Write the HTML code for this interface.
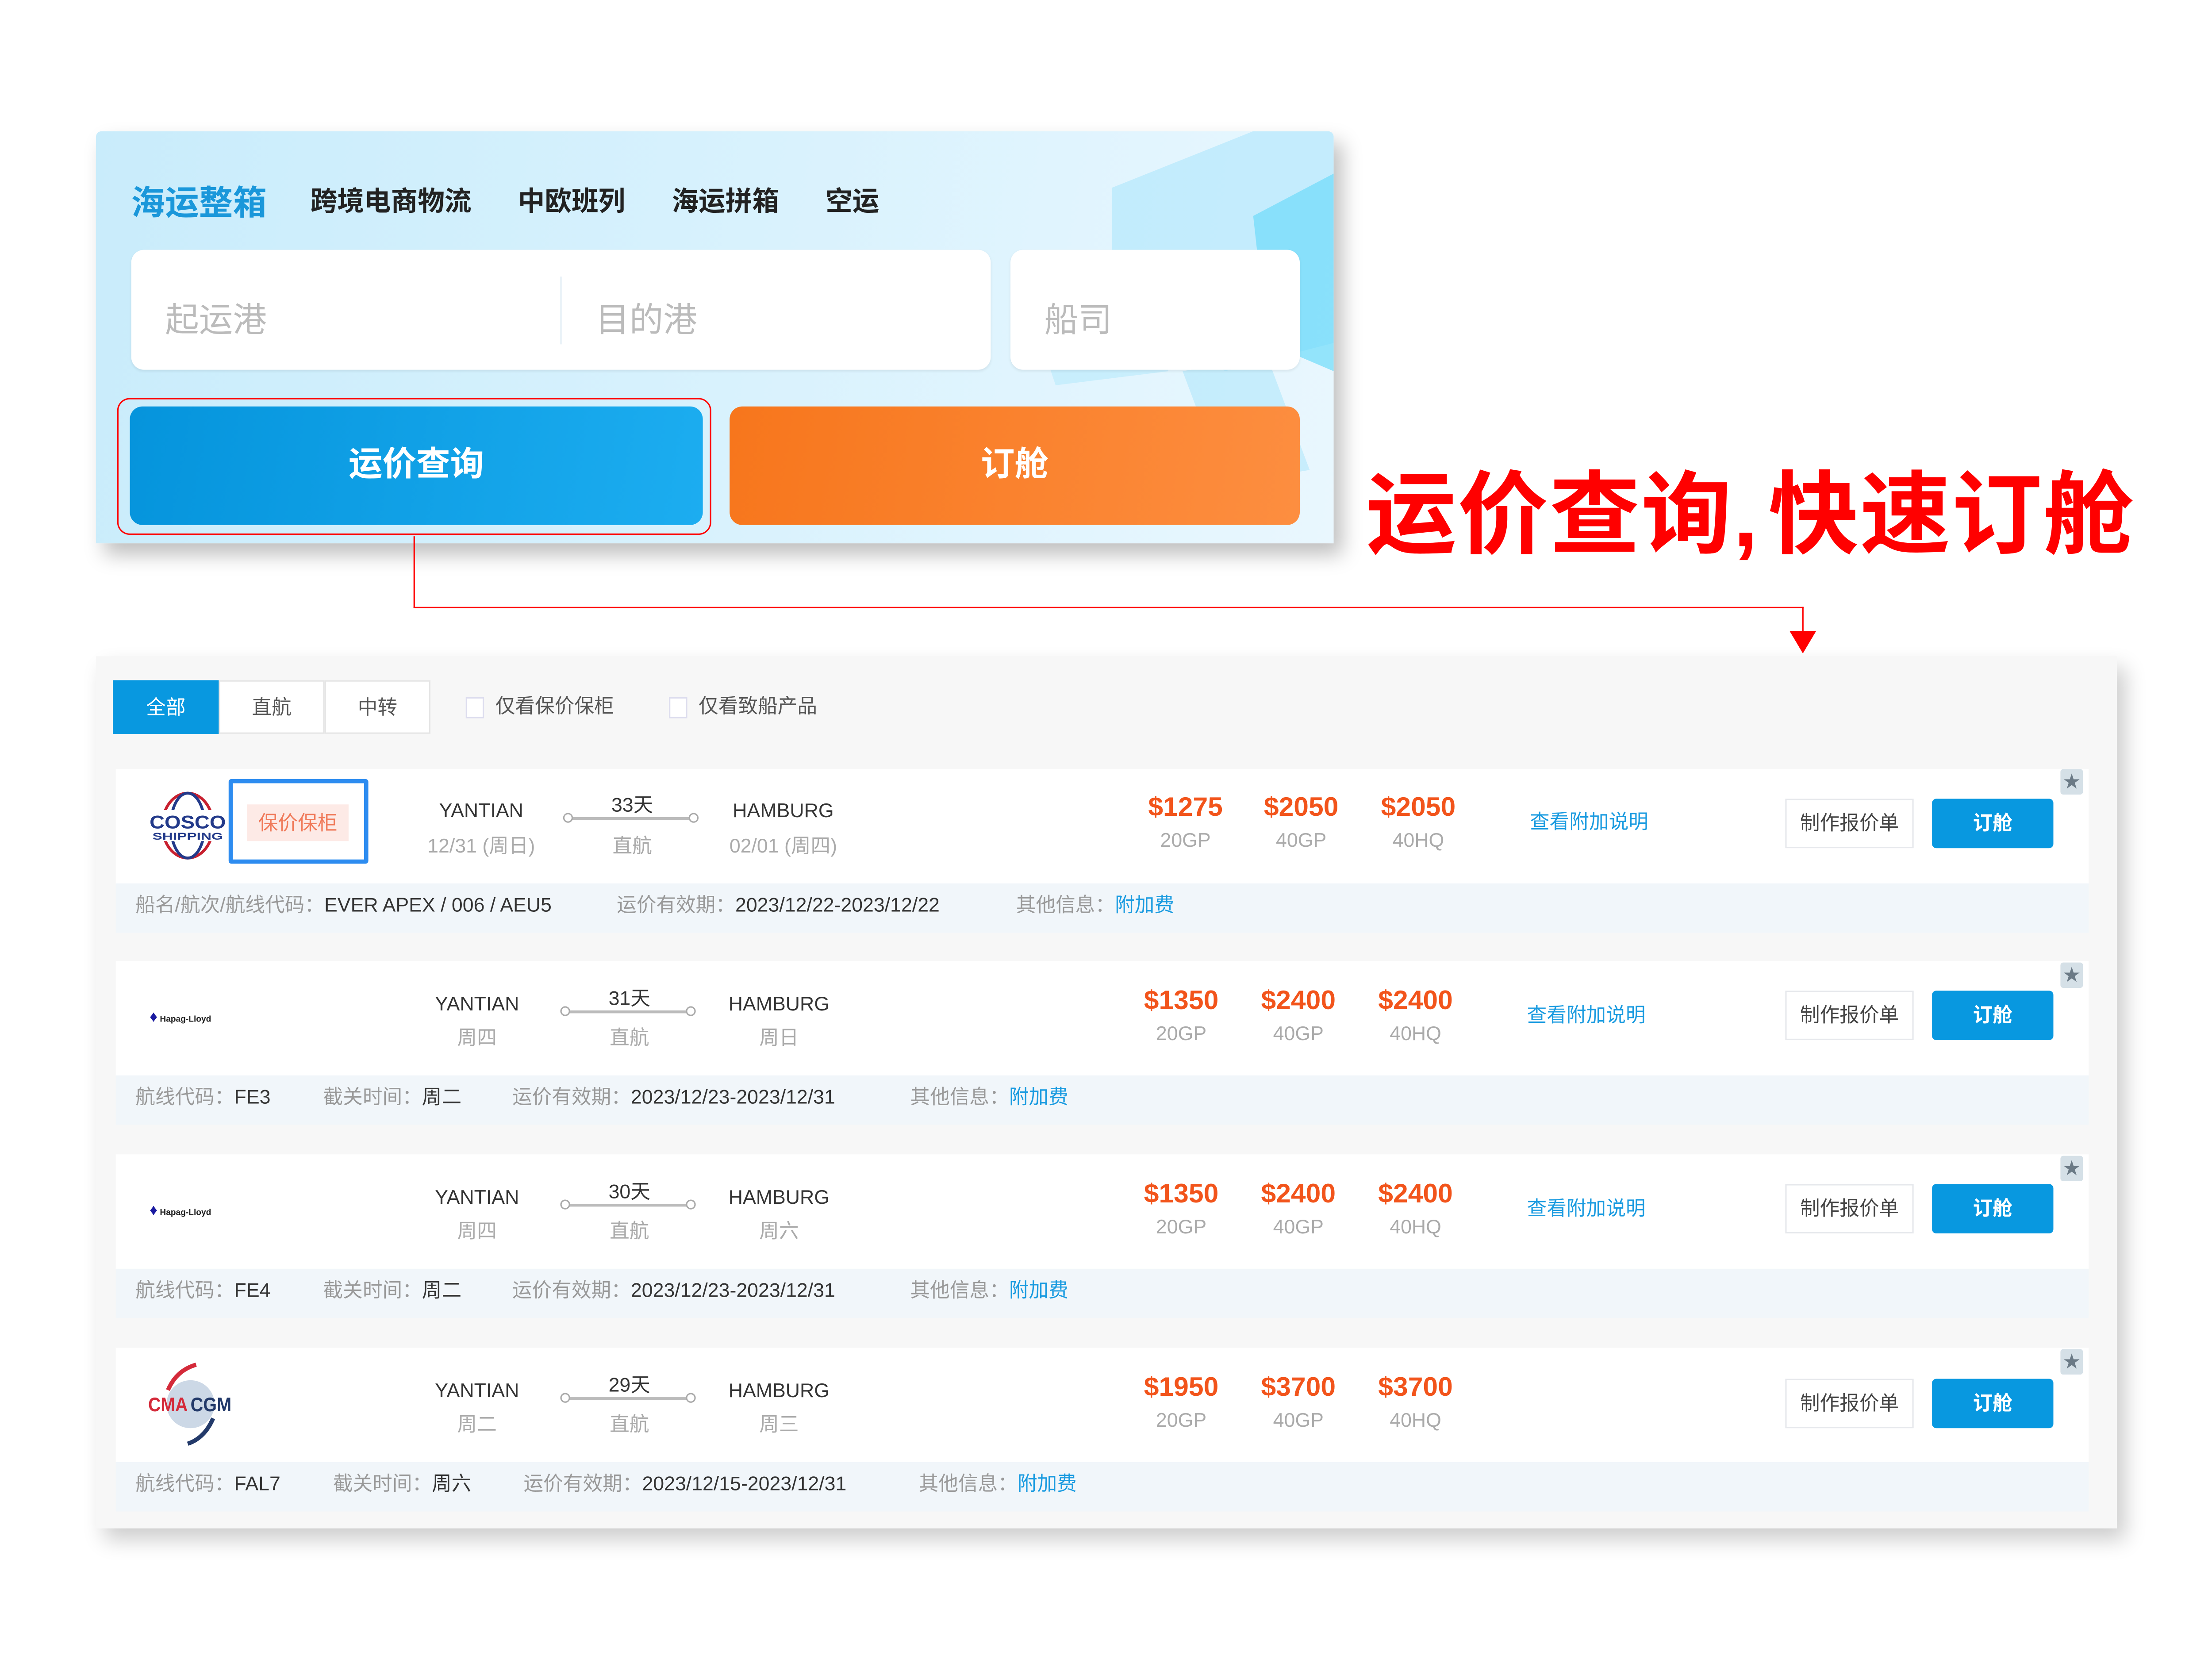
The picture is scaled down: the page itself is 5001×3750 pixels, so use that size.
<!DOCTYPE html>
<html><head><meta charset="utf-8">
<style>
*{margin:0;padding:0;box-sizing:border-box}
html,body{width:5001px;height:3750px;overflow:hidden;background:#fff}
#w{position:absolute;left:0;top:0;width:1563px;height:1172px;transform:scale(3.19);transform-origin:0 0;font-family:"Liberation Sans","Noto Sans CJK SC",sans-serif}
.a{position:absolute}
.card{left:68px;top:93px;width:877px;height:292px;background:linear-gradient(100deg,#c9ecfb 0%,#d6f1fd 45%,#e9f7fe 100%);box-shadow:6px 8px 14px rgba(0,0,0,.25);border-radius:4px 4px 0 0;overflow:hidden}
.tab{top:128px;font-size:19px;font-weight:bold;color:#222;white-space:nowrap}
.inp{background:#fff;border-radius:9px;box-shadow:0 1px 2px rgba(0,0,0,.08)}
.ph{font-size:24px;color:#bbb;top:207px}
.btn{border-radius:9px;color:#fff;font-weight:bold;font-size:24px;text-align:center;line-height:84px}
.panel{left:68px;top:465px;width:1432px;height:618px;background:#f7f7f7;box-shadow:6px 8px 14px rgba(0,0,0,.2)}
.ft{top:482px;height:38px;width:75px;line-height:36px;text-align:center;font-size:14px;color:#555;background:#fff;border:1px solid #e5e5e5}
.cb{width:13px;height:15px;border:1px solid #dde;background:#fff;top:494px}
.ct{top:490px;font-size:14px;color:#555}
.row{left:82px;width:1398px;height:116px;background:#fff}
.strip{left:0;bottom:0;width:100%;height:35px;background:#f1f6fa;font-size:14px;line-height:30px;color:#999;white-space:nowrap}
.strip span{position:absolute;top:0}
.strip b{font-weight:normal;color:#333}
.strip i{font-style:normal;color:#1a9be0}
.c{text-align:center;transform:translateX(-50%);white-space:nowrap}
.port{font-size:14px;color:#333}
.sub{font-size:14px;color:#aaa}
.pr{font-size:19px;font-weight:bold;color:#f2541b}
.lab{font-size:14px;color:#aaa}
.link{font-size:14px;color:#1a9be0}
.mk{width:91px;height:35px;border:1px solid #e6e8ec;background:#fff;font-size:14px;color:#444;text-align:center;line-height:33px}
.bk{width:86px;height:35px;background:#0898e0;border-radius:3px;color:#fff;font-size:14px;text-align:center;line-height:35px;font-weight:bold}
.star{width:16px;height:18px;background:#d5e0e7;border-radius:2px;color:#6b7a86;font-size:12px;text-align:center;line-height:18px}
.ln{height:2px;background:#bbb}
.dot{width:7px;height:7px;border:1px solid #aaa;border-radius:50%;background:#fff}
.hl{top:314px;font-size:64px;font-weight:bold;color:#f00;white-space:nowrap;letter-spacing:1px}
</style></head><body><div id="w">

<div class="a card">
  <svg class="a" style="left:600px;top:0" width="277" height="292">
    <polygon points="120,40 220,0 277,0 277,150 200,170 120,90" fill="#aee6fb" opacity=".6"/>
    <polygon points="220,60 277,30 277,170 230,150" fill="#6fdcfa" opacity=".7"/>
    <polygon points="60,120 130,100 160,170 80,180" fill="#b8e9fb" opacity=".6"/>
    <polygon points="170,170 230,160 260,240 200,250" fill="#a5e3fa" opacity=".5"/>
  </svg>
</div>
<div class="a tab" style="left:93px;top:124px;font-size:24px;color:#1a97da">海运整箱</div>
<div class="a tab" style="left:220px">跨境电商物流</div>
<div class="a tab" style="left:367px">中欧班列</div>
<div class="a tab" style="left:476px">海运拼箱</div>
<div class="a tab" style="left:585px">空运</div>
<div class="a inp" style="left:93px;top:177px;width:609px;height:85px"></div>
<div class="a" style="left:397px;top:196px;width:1px;height:48px;background:#e3eef5"></div>
<div class="a inp" style="left:716px;top:177px;width:205px;height:85px"></div>
<div class="a ph" style="left:117px">起运港</div>
<div class="a ph" style="left:422px">目的港</div>
<div class="a ph" style="left:740px">船司</div>
<div class="a" style="left:83px;top:282px;width:421px;height:97px;border:1.5px solid #f00;border-radius:9px"></div>
<div class="a btn" style="left:92px;top:288px;width:406px;height:84px;background:linear-gradient(100deg,#0594dc,#1cadf0)">运价查询</div>
<div class="a btn" style="left:517px;top:288px;width:404px;height:84px;background:linear-gradient(100deg,#f7761c,#fd8e40)">订舱</div>

<div class="a hl" style="left:968px">运价查询,</div>
<div class="a hl" style="left:1253px">快速订舱</div>

<div class="a" style="left:293px;top:380px;width:1px;height:51px;background:#f00"></div>
<div class="a" style="left:293px;top:430px;width:985px;height:1px;background:#f00"></div>
<div class="a" style="left:1277px;top:430px;width:1px;height:20px;background:#f00"></div>
<svg class="a" style="left:1268px;top:447px" width="19" height="17"><polygon points="0,0 19,0 9.5,16" fill="#f00"/></svg>

<div class="a panel"></div>
<div class="a ft" style="left:80px;background:#0898e0;color:#fff;border-color:#0898e0">全部</div>
<div class="a ft" style="left:155px">直航</div>
<div class="a ft" style="left:230px">中转</div>
<div class="a cb" style="left:330px"></div><div class="a ct" style="left:351px">仅看保价保柜</div>
<div class="a cb" style="left:474px"></div><div class="a ct" style="left:495px">仅看致船产品</div>

<div class="a row" style="top:545px">
  <div class="a strip"><span style="left:14px">船名/航次/航线代码：<b>EVER APEX / 006 / AEU5</b></span><span style="left:355px">运价有效期：<b>2023/12/22-2023/12/22</b></span><span style="left:638px">其他信息：<i>附加费</i></span></div>
</div>
<div class="a row" style="top:681px">
  <div class="a strip"><span style="left:14px">航线代码：<b>FE3</b></span><span style="left:147px">截关时间：<b>周二</b></span><span style="left:281px">运价有效期：<b>2023/12/23-2023/12/31</b></span><span style="left:563px">其他信息：<i>附加费</i></span></div>
</div>
<div class="a row" style="top:818px">
  <div class="a strip"><span style="left:14px">航线代码：<b>FE4</b></span><span style="left:147px">截关时间：<b>周二</b></span><span style="left:281px">运价有效期：<b>2023/12/23-2023/12/31</b></span><span style="left:563px">其他信息：<i>附加费</i></span></div>
</div>
<div class="a row" style="top:955px">
  <div class="a strip"><span style="left:14px">航线代码：<b>FAL7</b></span><span style="left:154px">截关时间：<b>周六</b></span><span style="left:289px">运价有效期：<b>2023/12/15-2023/12/31</b></span><span style="left:569px">其他信息：<i>附加费</i></span></div>
</div>

<svg class="a" style="left:103px;top:560px" width="60" height="50">
  <ellipse cx="30" cy="25" rx="18" ry="23" fill="none" stroke="#c8202f" stroke-width="2"/>
  <ellipse cx="30" cy="25" rx="12" ry="23" fill="none" stroke="#233a8a" stroke-width="2"/>
  <rect x="2" y="14" width="56" height="22" fill="#fff"/>
  <text x="30" y="27" font-family="Liberation Sans" font-weight="bold" font-size="13" fill="#233a8a" text-anchor="middle" textLength="54" lengthAdjust="spacingAndGlyphs">COSCO</text>
  <text x="30" y="35" font-family="Liberation Sans" font-weight="bold" font-size="7" fill="#233a8a" text-anchor="middle" textLength="50" lengthAdjust="spacingAndGlyphs">SHIPPING</text>
</svg>
<div class="a" style="left:162px;top:552px;width:99px;height:60px;border:3px solid #2d8cf0;border-radius:2px;background:#fff"></div>
<div class="a" style="left:175px;top:570px;width:72px;height:26px;background:#fdeae6;color:#f07a5a;font-size:14px;text-align:center;line-height:26px">保价保柜</div>
<div class="a" style="left:106px;top:715px;font-size:11px;font-weight:bold;color:#1a1aa0">&#9830;<span style="font-size:6px;color:#222"> Hapag-Lloyd</span></div>
<div class="a" style="left:106px;top:852px;font-size:11px;font-weight:bold;color:#1a1aa0">&#9830;<span style="font-size:6px;color:#222"> Hapag-Lloyd</span></div>
<svg class="a" style="left:103px;top:965px" width="64" height="60">
  <circle cx="32" cy="30" r="17" fill="#ccd8e6"/>
  <path d="M16 20 Q22 6 36 2" stroke="#d42a3a" stroke-width="3" fill="none"/>
  <path d="M48 40 Q42 54 30 58" stroke="#233a6a" stroke-width="3" fill="none"/>
  <text x="2" y="35" font-family="Liberation Sans" font-weight="bold" font-size="14" fill="#d42a3a" textLength="28" lengthAdjust="spacingAndGlyphs">CMA</text>
  <text x="32" y="35" font-family="Liberation Sans" font-weight="bold" font-size="14" fill="#233a6a" textLength="29" lengthAdjust="spacingAndGlyphs">CGM</text>
</svg>

<div class="a c port" style="left:341px;top:566px">YANTIAN</div>
<div class="a c sub" style="left:341px;top:589px">12/31 (周日)</div>
<div class="a c port" style="left:448px;top:560px">33天</div>
<div class="a ln" style="left:403px;top:579px;width:88px"></div><div class="a dot" style="left:399px;top:576px"></div><div class="a dot" style="left:488px;top:576px"></div>
<div class="a c sub" style="left:448px;top:589px">直航</div>
<div class="a c port" style="left:555px;top:566px">HAMBURG</div>
<div class="a c sub" style="left:555px;top:589px">02/01 (周四)</div>
<div class="a c pr" style="left:840px;top:562px">$1275</div><div class="a c lab" style="left:840px;top:587px">20GP</div>
<div class="a c pr" style="left:922px;top:562px">$2050</div><div class="a c lab" style="left:922px;top:587px">40GP</div>
<div class="a c pr" style="left:1005px;top:562px">$2050</div><div class="a c lab" style="left:1005px;top:587px">40HQ</div>
<div class="a link" style="left:1084px;top:572px">查看附加说明</div>
<div class="a mk" style="left:1265px;top:566px">制作报价单</div>
<div class="a bk" style="left:1369px;top:566px">订舱</div>
<div class="a star" style="left:1460px;top:545px">★</div>

<div class="a c port" style="left:338px;top:703px">YANTIAN</div>
<div class="a c sub" style="left:338px;top:725px">周四</div>
<div class="a c port" style="left:446px;top:697px">31天</div>
<div class="a ln" style="left:401px;top:716px;width:88px"></div><div class="a dot" style="left:397px;top:713px"></div><div class="a dot" style="left:486px;top:713px"></div>
<div class="a c sub" style="left:446px;top:725px">直航</div>
<div class="a c port" style="left:552px;top:703px">HAMBURG</div>
<div class="a c sub" style="left:552px;top:725px">周日</div>
<div class="a c pr" style="left:837px;top:699px">$1350</div><div class="a c lab" style="left:837px;top:724px">20GP</div>
<div class="a c pr" style="left:920px;top:699px">$2400</div><div class="a c lab" style="left:920px;top:724px">40GP</div>
<div class="a c pr" style="left:1003px;top:699px">$2400</div><div class="a c lab" style="left:1003px;top:724px">40HQ</div>
<div class="a link" style="left:1082px;top:709px">查看附加说明</div>
<div class="a mk" style="left:1265px;top:702px">制作报价单</div>
<div class="a bk" style="left:1369px;top:702px">订舱</div>
<div class="a star" style="left:1460px;top:682px">★</div>

<div class="a c port" style="left:338px;top:840px">YANTIAN</div>
<div class="a c sub" style="left:338px;top:862px">周四</div>
<div class="a c port" style="left:446px;top:834px">30天</div>
<div class="a ln" style="left:401px;top:853px;width:88px"></div><div class="a dot" style="left:397px;top:850px"></div><div class="a dot" style="left:486px;top:850px"></div>
<div class="a c sub" style="left:446px;top:862px">直航</div>
<div class="a c port" style="left:552px;top:840px">HAMBURG</div>
<div class="a c sub" style="left:552px;top:862px">周六</div>
<div class="a c pr" style="left:837px;top:836px">$1350</div><div class="a c lab" style="left:837px;top:861px">20GP</div>
<div class="a c pr" style="left:920px;top:836px">$2400</div><div class="a c lab" style="left:920px;top:861px">40GP</div>
<div class="a c pr" style="left:1003px;top:836px">$2400</div><div class="a c lab" style="left:1003px;top:861px">40HQ</div>
<div class="a link" style="left:1082px;top:846px">查看附加说明</div>
<div class="a mk" style="left:1265px;top:839px">制作报价单</div>
<div class="a bk" style="left:1369px;top:839px">订舱</div>
<div class="a star" style="left:1460px;top:819px">★</div>

<div class="a c port" style="left:338px;top:977px">YANTIAN</div>
<div class="a c sub" style="left:338px;top:999px">周二</div>
<div class="a c port" style="left:446px;top:971px">29天</div>
<div class="a ln" style="left:401px;top:990px;width:88px"></div><div class="a dot" style="left:397px;top:987px"></div><div class="a dot" style="left:486px;top:987px"></div>
<div class="a c sub" style="left:446px;top:999px">直航</div>
<div class="a c port" style="left:552px;top:977px">HAMBURG</div>
<div class="a c sub" style="left:552px;top:999px">周三</div>
<div class="a c pr" style="left:837px;top:973px">$1950</div><div class="a c lab" style="left:837px;top:998px">20GP</div>
<div class="a c pr" style="left:920px;top:973px">$3700</div><div class="a c lab" style="left:920px;top:998px">40GP</div>
<div class="a c pr" style="left:1003px;top:973px">$3700</div><div class="a c lab" style="left:1003px;top:998px">40HQ</div>
<div class="a mk" style="left:1265px;top:977px">制作报价单</div>
<div class="a bk" style="left:1369px;top:977px">订舱</div>
<div class="a star" style="left:1460px;top:956px">★</div>

</div></body></html>
